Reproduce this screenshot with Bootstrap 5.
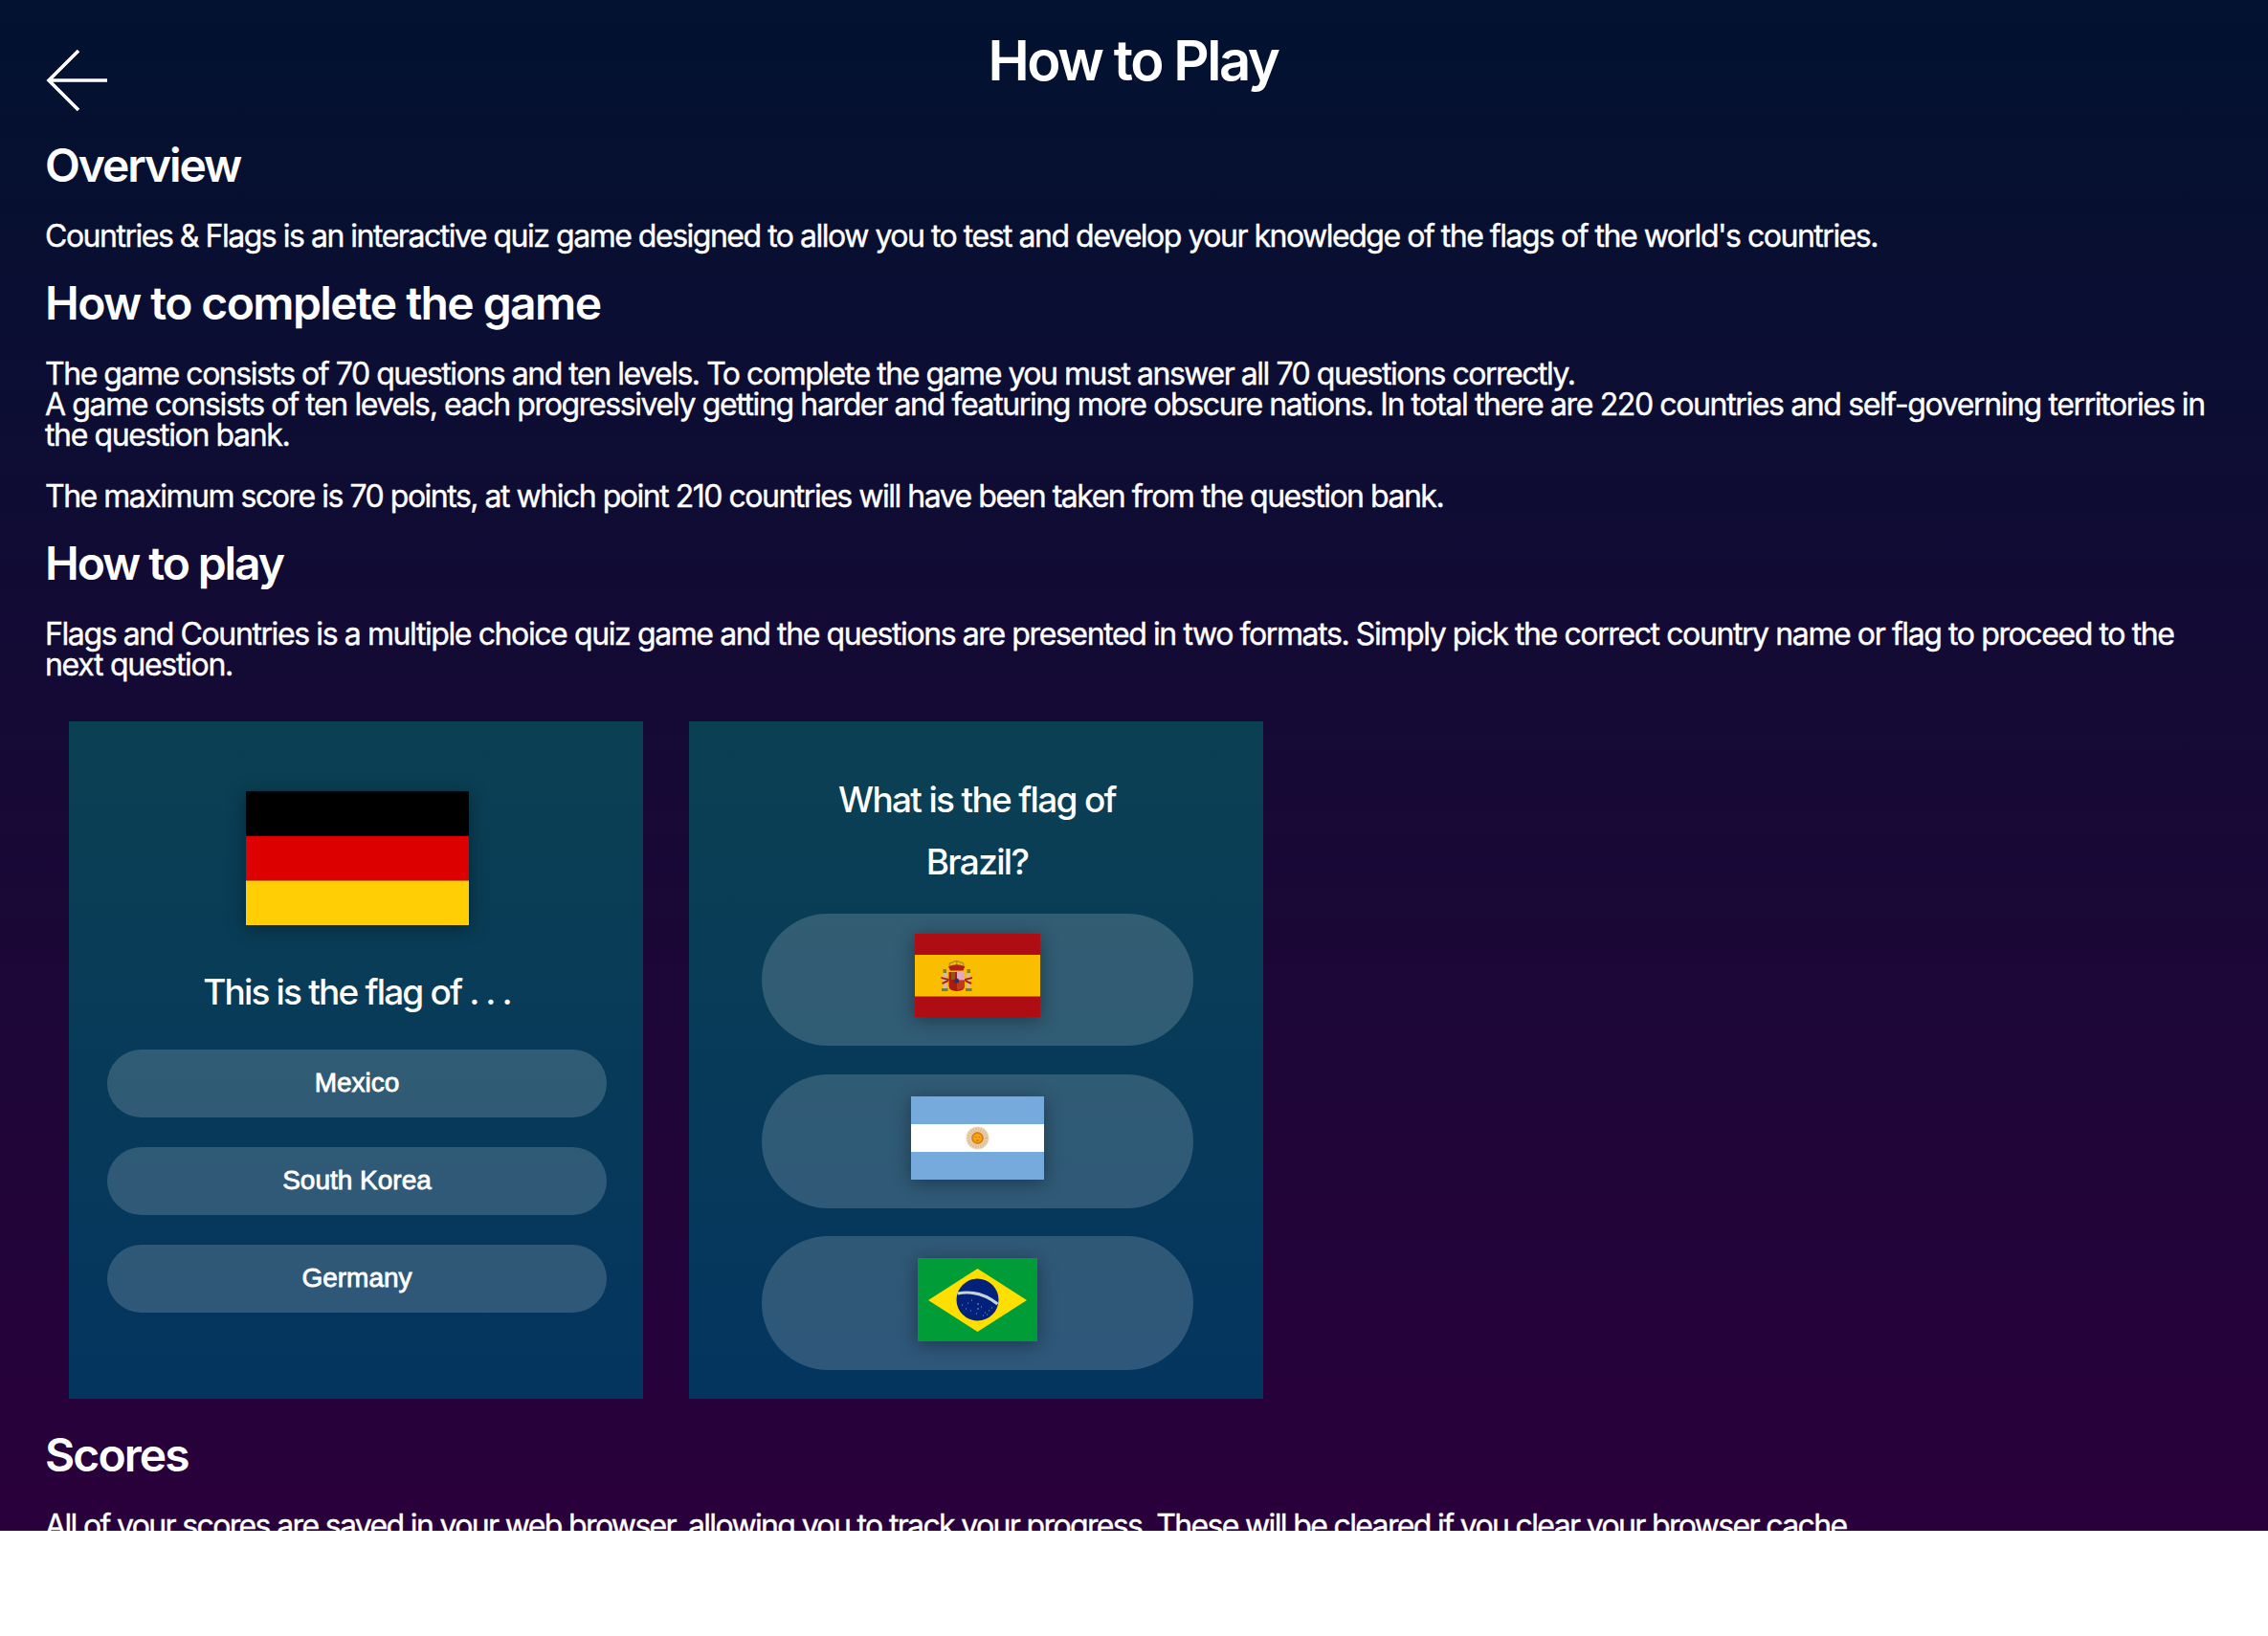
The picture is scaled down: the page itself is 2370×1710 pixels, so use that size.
<!DOCTYPE html>
<html lang="en">
<head>
<meta charset="utf-8">
<title>How to Play</title>
<link href="https://cdn.jsdelivr.net/npm/bootstrap@5.3.0/dist/css/bootstrap.min.css" rel="stylesheet">
<style>
body{background:#fff;font-family:Inter,sans-serif}
.screen{height:1600px;padding:0 48px 0 47px;background:linear-gradient(#021230,#2a003b);color:#fff}
.topbar{height:149px;padding-top:28px}
.back{position:absolute;left:1px;top:51px;width:66px;height:66px;overflow:visible}
.screen h1{font-size:58px;line-height:70px;font-weight:600;letter-spacing:-2.45px;padding-right:1px;margin:0}
.screen h2{font-size:48px;line-height:48px;font-weight:600;letter-spacing:-2.1px;margin:30px 0 34px}
.screen h2.first{margin-top:0}
.screen h2.wide{letter-spacing:-1.6px}
.screen h2.after-shots{margin-top:35px;letter-spacing:-1.9px}
.screen p{font-size:32px;line-height:32px;margin:0;-webkit-text-stroke:.4px #fff}
.ln{display:block;white-space:nowrap;min-height:32px}
.t1{letter-spacing:-1.485px}
.t2{letter-spacing:-1.465px}
.t3{letter-spacing:-1.375px}
.t4{letter-spacing:-1.4px}
.t5{letter-spacing:-1.286px}
.t6{letter-spacing:-1.65px}
.shots{gap:48px;padding:43px 25px 0}
.shot{width:600px;height:708px;padding-left:2px;background:linear-gradient(#0b4053,#04355f)}
.ask{font-size:37px;line-height:65px;font-weight:500}
.ask-name{margin:37px 0 28px;letter-spacing:-1.82px}
.ask-flag{margin:49px 0 22px;letter-spacing:-1.69px}
.opt{width:522px;height:71px;margin-bottom:31px;background:rgba(255,255,255,.17);font:28px/1 "Liberation Sans",Arial,sans-serif;-webkit-text-stroke:.8px #fff;padding-bottom:1px}
.pick{width:451px;height:140px;margin-bottom:29px;background:rgba(255,255,255,.17);padding-bottom:7px}
.pick.top{height:138px;margin-bottom:30px;padding-bottom:9px}
.flag{display:block;box-shadow:0 3px 18px rgba(0,0,0,.38)}
.flag.big{margin-top:73px}
</style>
<script src="https://cdn.jsdelivr.net/npm/bootstrap@5.3.0/dist/js/bootstrap.bundle.min.js"></script>
</head>
<body>
<main class="screen overflow-hidden">
<header class="topbar position-relative text-center">
<a href="#" aria-label="Back"><svg class="back" viewBox="0 0 66 66" fill="none" stroke="#fff" stroke-width="3.6"><path d="M34 2 3 33 34 64M3 33H64"/></svg></a>
<h1>How to Play</h1>
</header>
<h2 class="first">Overview</h2>
<p><span class="ln t1">Countries &amp; Flags is an interactive quiz game designed to allow you to test and develop your knowledge of the flags of the world's countries.</span></p>
<h2 class="wide">How to complete the game</h2>
<p><span class="ln t2">The game consists of 70 questions and ten levels. To complete the game you must answer all 70 questions correctly.</span>
<span class="ln t3">A game consists of ten levels, each progressively getting harder and featuring more obscure nations. In total there are 220 countries and self-governing territories in</span>
<span class="ln t3">the question bank.</span>
<span class="ln"></span>
<span class="ln t1">The maximum score is 70 points, at which point 210 countries will have been taken from the question bank.</span></p>
<h2>How to play</h2>
<p><span class="ln t4">Flags and Countries is a multiple choice quiz game and the questions are presented in two formats. Simply pick the correct country name or flag to proceed to the</span>
<span class="ln t5">next question.</span></p>
<section class="shots d-flex">
<div class="shot d-flex flex-column align-items-center">
<svg class="flag big" width="233" height="140" viewBox="0 0 233 140"><path d="M0 0h233v47H0z"/><path fill="#d00" d="M0 46.7h233v47H0z"/><path fill="#ffce05" d="M0 93.4h233V140H0z"/></svg>
<div class="ask ask-name">This is the flag of . . .</div>
<div class="opt rounded-pill d-flex align-items-center justify-content-center">Mexico</div>
<div class="opt rounded-pill d-flex align-items-center justify-content-center">South Korea</div>
<div class="opt rounded-pill d-flex align-items-center justify-content-center">Germany</div>
</div>
<div class="shot d-flex flex-column align-items-center">
<div class="ask ask-flag text-center">What is the flag of<br>Brazil?</div>
<div class="pick top rounded-pill d-flex align-items-center justify-content-center">
<svg class="flag" width="131" height="87" viewBox="0 0 131 87"><path fill="#ad0d13" d="M0 0h131v87H0z"/><path fill="#fabd00" d="M0 22h131v43.500H0z"/>
<path fill="#cdbfae" d="M29.500 40h3.500v17h-3.500zM54.500 40H58v17h-3.500z"/><path fill="#6b7d57" d="M28 57h6.500v3H28zM53 57h6.500v3H53z"/><path fill="#8f7a2a" d="M29.500 37H33v4h-3.500zM54.500 37H58v4h-3.500z"/><path fill="none" stroke="#a8912a" stroke-width="1.300" d="M36 33q0-3 3.500-3 4-3 8 0 3.500 0 3.500 3M43.700 28v5"/><path fill="#b01f1b" d="M35 34q8.700-3.500 17.400 0l-2 4.500H37zM27.500 45l8 2v2l-8-2zM60 45l-8 2v2l8-2zM28 51l7-3v2l-6 3zM59.500 51l-7-3v2l6 3z"/><path fill="#ad1a10" d="M35.500 40H52v14.500q0 5-8.300 5.500-8.200-.5-8.200-5.500z"/><path fill="#8c5a0e" d="M38 40h4v8h-4z"/><path fill="#e3a9c4" d="M44 40h8v8.500h-8z"/><path fill="#c23a1a" d="M44 49h8v5q0 4-8 5z"/><circle cx="43.500" cy="49" r="2.600" fill="#2b3566"/></svg></div>
<div class="pick rounded-pill d-flex align-items-center justify-content-center">
<svg class="flag" width="139" height="87" viewBox="0 0 139 87"><path fill="#76aadc" d="M0 0h139v87H0z"/><path fill="#fff" d="M0 29h139v29H0z"/><circle cx="69.500" cy="43.500" r="12" fill="#ecd9c0"/><circle cx="69.500" cy="43.500" r="9" fill="none" stroke="#dfbb8f" stroke-width="4" stroke-dasharray="1.500 1"/><circle cx="69.500" cy="43.500" r="6.500" fill="#d98314"/><circle cx="69.500" cy="43.500" r="4.500" fill="#f5a70c"/><path stroke="#b86c08" d="M67 42.500h1.500M70.500 42.500H72M68 46h3"/></svg></div>
<div class="pick rounded-pill d-flex align-items-center justify-content-center">
<svg class="flag" width="125" height="87" viewBox="0 0 125 87"><path fill="#009c37" d="M0 0h125v87H0z"/><path fill="#fedf00" d="M62.500 11 114 44 62.500 77 11 44z"/><circle cx="62.500" cy="43.500" r="22" fill="#02217a"/><path d="M41.500 37q23-4.500 42 11" fill="none" stroke="#c3d3dc" stroke-width="3.200"/><path d="M46 49h1M50 53h1M52 47h1M56 44h1M62 48h2M62 53h2M61 58h1M66 51h1M70 57h1M74 55h1M72 59h1M77 52h1M55 55h1M68 60h1" stroke="#5f76b0" stroke-width="1.500"/></svg></div>
</div>
</section>
<h2 class="after-shots">Scores</h2>
<p><span class="ln t6">All of your scores are saved in your web browser, allowing you to track your progress. These will be cleared if you clear your browser cache.</span></p>
</main>
</body>
</html>
